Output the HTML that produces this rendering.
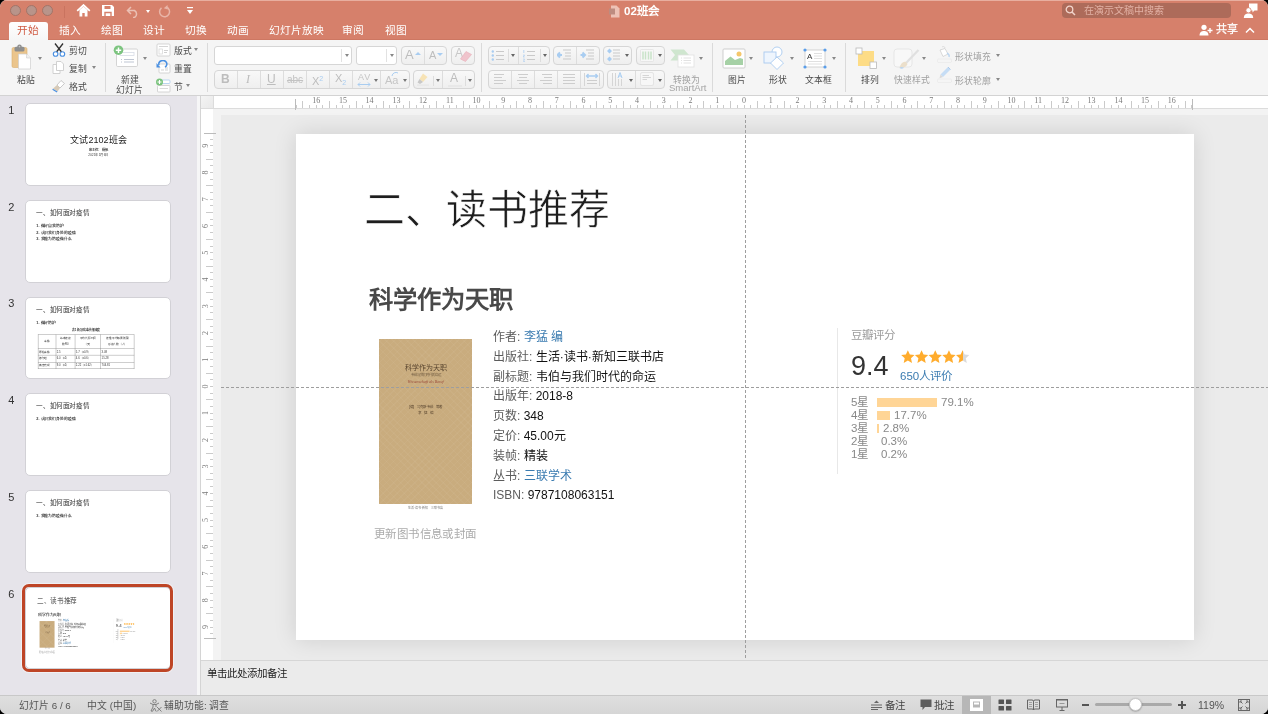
<!DOCTYPE html>
<html lang="zh-CN">
<head>
<meta charset="utf-8">
<style>
*{box-sizing:border-box;margin:0;padding:0}
html,body{width:1268px;height:714px;overflow:hidden;background:#000}
body{font-family:"Liberation Sans",sans-serif;position:relative}
.a{position:absolute}
#win{will-change:transform;position:absolute;left:0;top:0;width:1268px;height:714px;border-radius:7px;overflow:hidden;background:#F5F5F5}
#title{position:absolute;left:0;top:0;width:1268px;height:40px;background:#D6806B;border-top:1px solid #E8AE9F;border-bottom:1px solid #CD7762}
.tl{position:absolute;top:4px;width:11px;height:11px;border-radius:50%;background:#B8948A;border:1px solid #A27468}
.tab{position:absolute;top:22.5px;font-size:10.7px;line-height:13px;color:#fff;white-space:nowrap}
#ribbon{position:absolute;left:0;top:40px;width:1268px;height:56px;background:#F5F5F5;border-bottom:1px solid #D3D3D3}
.rl{position:absolute;font-size:8.8px;line-height:12px;color:#4A4A4A;white-space:nowrap;margin-top:0.6px}
.rl.rg{color:#A0A0A0}
.sep{position:absolute;top:3px;width:1px;height:49px;background:#DADADA}
.dd{position:absolute;width:0;height:0;border-left:2.5px solid transparent;border-right:2.5px solid transparent;border-top:3.5px solid #888;margin-left:0.5px}
.box{position:absolute;background:#fff;border:1px solid #D6D6D6;border-radius:3px}
.btn{position:absolute;background:linear-gradient(#F8F8F8,#EFEFEF);border:1px solid #D6D6D6;border-radius:4px}
#left{position:absolute;left:0;top:96px;width:201px;height:599px;background:#E6E4EA;border-right:4px solid #F6F6F7}
.num{position:absolute;left:8.3px;font-size:11px;color:#333}
.th{position:absolute;left:25px;width:145.6px;height:82.7px;background:#fff;border:1px solid #D2D1D6;border-radius:5px;overflow:hidden}
#canvas{position:absolute;left:213px;top:108px;width:1055px;height:552px;background:#F3F3F3}
#cv2{position:absolute;left:221px;top:115px;width:1047px;height:545px;background:#EBEBEB}
#slide{position:absolute;left:296px;top:134px;width:898px;height:506px;background:#fff;box-shadow:0 0 22px rgba(0,0,0,0.12)}
#notes{position:absolute;left:201px;top:660px;width:1067px;height:35px;background:#EBEBEB;border-top:1px solid #D6D6D6}
#status{position:absolute;left:0;top:695px;width:1268px;height:19px;background:linear-gradient(#DFDFDF,#D6D6D6);border-top:1px solid #C8C8C8}
.st{position:absolute;top:3px;font-size:9.8px;line-height:13px;color:#555;white-space:nowrap}
.info{font-size:12px;line-height:19.8px;color:#111;white-space:nowrap}
.info .lb{color:#5C5C5C}
.info .lk,.lk{color:#3A7BB0}
.bars{font-size:11.5px;line-height:13.1px;color:#888;white-space:nowrap}
.bars div{height:13.1px;position:relative}
.bars .sl{display:inline-block;width:26px}
.bars .bar{display:inline-block;height:9px;background:#FFD596;vertical-align:-1px;margin-right:4px}
</style>
</head>
<body>
<div id="win">
  <div id="title">
    <div class="tl" style="left:10px"></div>
    <div class="tl" style="left:26px"></div>
    <div class="tl" style="left:42px"></div>
    <div class="a" style="left:64px;top:5px;width:1px;height:12px;background:#C9735F"></div>
    <svg class="a" style="left:76px;top:3px" width="15" height="13" viewBox="0 0 15 13"><path d="M1.2 6.8 L7.5 1 L13.8 6.8" fill="none" stroke="#fff" stroke-width="1.7"/><path d="M3.5 6 L7.5 2.5 L11.5 6 V12.5 H8.7 V9 H6.3 V12.5 H3.5 Z" fill="#fff"/></svg>
    <svg class="a" style="left:101px;top:3px" width="14" height="13" viewBox="0 0 14 13"><path d="M1 1 H11 L13 3 V12 H1 Z" fill="#fff"/><rect x="3.5" y="2" width="6" height="3" fill="#D6806B"/><path d="M4 12 V8.5 H10 V12" fill="none" stroke="#D6806B" stroke-width="1.4"/></svg>
    <svg class="a" style="left:126px;top:4px" width="14" height="13" viewBox="0 0 14 13"><path d="M5 2 L1.5 5.5 L5 9 M1.5 5.5 H8.5 A4 4 0 0 1 8.5 12.5 H7" fill="none" stroke="#EBC0B4" stroke-width="1.5"/></svg>
    <div class="dd" style="left:145px;top:9px;border-top-color:#fff;border-left-width:2.5px;border-right-width:2.5px;border-top-width:3px"></div>
    <svg class="a" style="left:158px;top:4px" width="13" height="13" viewBox="0 0 13 13"><path d="M8.2 2 A5 5 0 1 1 3.5 2.8" fill="none" stroke="#E9B5A8" stroke-width="1.5"/><path d="M9.5 0 L9.8 4.5 L5.8 3.2 Z" fill="#E9B5A8"/></svg>
    <svg class="a" style="left:187px;top:6px" width="6" height="9" viewBox="0 0 6 9"><rect x="0" y="0" width="6" height="1.2" fill="#fff"/><path d="M0 3 H6 L3 7 Z" fill="#fff"/></svg>
    <div class="a" style="left:9px;top:21px;width:39px;height:20px;background:linear-gradient(#FFFFFF,#F5F5F5);border-radius:3px 3px 0 0"></div>
    <div class="tab" style="left:17px;color:#CF5A42;">开始</div>
    <div class="tab" style="left:59px">插入</div>
    <div class="tab" style="left:101px">绘图</div>
    <div class="tab" style="left:143px">设计</div>
    <div class="tab" style="left:185px">切换</div>
    <div class="tab" style="left:227px">动画</div>
    <div class="tab" style="left:269px">幻灯片放映</div>
    <div class="tab" style="left:342px">审阅</div>
    <div class="tab" style="left:385px">视图</div>
    <svg class="a" style="left:609px;top:4px" width="11" height="13" viewBox="0 0 11 13"><path d="M2 0.5 H7.5 L10.5 3.5 V12.5 H2 Z" fill="#EDC2B6"/><rect x="0" y="3.5" width="6" height="6" fill="#BD8C80"/></svg>
    <div class="a" style="left:624px;top:2.5px;font-size:11.5px;line-height:14px;font-weight:bold;letter-spacing:0.2px;color:#fff;white-space:nowrap">02班会</div>
    <div class="a" style="left:1062px;top:2px;width:169px;height:15px;background:#AD6B5A;border-radius:4px"></div>
    <svg class="a" style="left:1065px;top:4px" width="11" height="11" viewBox="0 0 11 11"><circle cx="4.5" cy="4.5" r="3.3" fill="none" stroke="#F2D4CB" stroke-width="1.3"/><path d="M7 7 L10 10" stroke="#F2D4CB" stroke-width="1.5"/></svg>
    <div class="a" style="left:1084px;top:3px;font-size:10px;line-height:14px;color:#E2B1A4;white-space:nowrap">在演示文稿中搜索</div>
    <svg class="a" style="left:1243px;top:2px" width="16" height="16" viewBox="0 0 16 16"><path d="M6 0.5 H14.5 V7.5 H11.5 L9.5 9.5 V7.5 H6 Z" fill="#fff"/><circle cx="5.5" cy="7.3" r="2.6" fill="#fff" stroke="#D6806B" stroke-width="0.8"/><path d="M0.8 15 C1 11.5 3 10.5 5.5 10.5 C8 10.5 10 11.5 10.2 15 Z" fill="#fff"/></svg>
    <svg class="a" style="left:1199px;top:23px" width="14" height="12" viewBox="0 0 14 12"><circle cx="5" cy="3.3" r="2.6" fill="#fff"/><path d="M0.5 11.5 C0.7 8 2.5 7 5 7 C7.5 7 9.3 8 9.5 11.5 Z" fill="#fff"/><path d="M11 4 V9 M8.5 6.5 H13.5" stroke="#fff" stroke-width="1.4"/></svg>
    <div class="a" style="left:1216px;top:20.5px;font-size:11px;line-height:14px;color:#fff;-webkit-text-stroke:0.25px #fff;white-space:nowrap">共享</div>
    <svg class="a" style="left:1245px;top:26px" width="10" height="7" viewBox="0 0 10 7"><path d="M1 5.5 L5 1.5 L9 5.5" fill="none" stroke="#fff" stroke-width="1.5"/></svg>
  </div>
  <div id="ribbon"></div>
  <div id="rib" class="a" style="left:0;top:0;width:1268px;height:96px">
    <!-- clipboard -->
    <svg class="a" style="left:11px;top:44px" width="21" height="26" viewBox="0 0 21 26"><rect x="1" y="3.5" width="15" height="20" rx="1.5" fill="#EBC58C" stroke="#D9AE6E" stroke-width="0.6"/><rect x="3.5" y="2.8" width="10" height="4.6" rx="1.5" fill="#8E8E8E"/><circle cx="8.5" cy="2.6" r="2.2" fill="#8E8E8E"/><circle cx="8.5" cy="2.6" r="0.8" fill="#C8C8C8"/><path d="M7.5 10 H15.5 L19.5 14 V25 H7.5 Z" fill="#fff" stroke="#CFCFCF" stroke-width="0.7"/><path d="M15.5 10 V14 H19.5" fill="#F0F0F0" stroke="#CFCFCF" stroke-width="0.6"/></svg>
    <div class="dd" style="left:37px;top:57px"></div>
    <div class="rl" style="left:17px;top:73px">粘贴</div>
    <svg class="a" style="left:52px;top:43px" width="14" height="14" viewBox="0 0 14 14"><path d="M3 0.5 L9.5 9 M11 0.5 L4.5 9" stroke="#333" stroke-width="1.3"/><circle cx="3.6" cy="11" r="2.3" fill="#fff" stroke="#4A90E2" stroke-width="1.1"/><circle cx="10.4" cy="11" r="2.3" fill="#fff" stroke="#4A90E2" stroke-width="1.1"/></svg>
    <div class="rl" style="left:69px;top:44px">剪切</div>
    <svg class="a" style="left:52px;top:61px" width="13" height="13" viewBox="0 0 13 13"><path d="M4.5 0.5 H9 L11.5 3 V9.5 H4.5 Z" fill="#fff" stroke="#C6C6C6" stroke-width="0.8"/><path d="M1 3.5 H4.5 V9.5 H8 V12.5 H1 Z" fill="#fff" stroke="#C6C6C6" stroke-width="0.8"/></svg>
    <div class="rl" style="left:69px;top:62px">复制</div>
    <div class="dd" style="left:91px;top:66px"></div>
    <svg class="a" style="left:52px;top:79px" width="14" height="14" viewBox="0 0 14 14"><path d="M9 1.5 L12.5 4.5 L8 9 L5 6 Z" fill="#fff" stroke="#BDBDBD" stroke-width="0.8"/><path d="M5 6 L8 9 L5.5 12.5 L0.8 9.8 Z" fill="#D8CBB8"/><path d="M0.8 9.8 L5.5 12.5 L4.8 13.5 L0.3 10.8 Z" fill="#4A90E2"/></svg>
    <div class="rl" style="left:69px;top:80px">格式</div>
    <div class="sep" style="left:105px;top:43px"></div>
    <!-- slides -->
    <svg class="a" style="left:113px;top:44px" width="26" height="24" viewBox="0 0 26 24"><rect x="3.5" y="5" width="21" height="17.5" rx="1.2" fill="#fff" stroke="#CFCFCF" stroke-width="0.9"/><rect x="7" y="8.5" width="14" height="3" fill="none" stroke="#D8DCE6" stroke-width="0.8"/><path d="M8 15.5 H9 M11 15.5 H21 M8 18 H9 M11 18 H21" stroke="#AEB7C8" stroke-width="0.8"/><circle cx="5.5" cy="6.2" r="4.8" fill="#7CC47F"/><path d="M5.5 3.5 V9 M2.8 6.2 H8.2" stroke="#fff" stroke-width="1.5"/></svg>
    <div class="dd" style="left:142px;top:57px"></div>
    <div class="rl" style="left:121px;top:73px">新建</div>
    <div class="rl" style="left:116px;top:83px">幻灯片</div>
    <svg class="a" style="left:156px;top:43px" width="15" height="14" viewBox="0 0 15 14"><rect x="1" y="1" width="13" height="12" rx="1" fill="#fff" stroke="#CACACA" stroke-width="0.8"/><path d="M3 3.5 H12" stroke="#D5D5D5" stroke-width="1.2"/><rect x="3" y="6" width="3.5" height="5" fill="none" stroke="#D5D5D5" stroke-width="0.7"/><path d="M8 7.5 H12 M8 9.5 H11" stroke="#C5C5C5" stroke-width="0.8"/></svg>
    <div class="rl" style="left:174px;top:44px">版式</div>
    <div class="dd" style="left:193px;top:48px"></div>
    <svg class="a" style="left:156px;top:60px" width="15" height="14" viewBox="0 0 15 14"><rect x="3" y="4" width="11" height="9" rx="1" fill="#fff" stroke="#CACACA" stroke-width="0.8"/><path d="M5 10 H8 M9 8 H12 M9 10 H12" stroke="#C5C5C5" stroke-width="0.8"/><path d="M3 5 A4 3.5 0 1 1 9 7" fill="none" stroke="#4A90E2" stroke-width="1.5"/><path d="M0.5 3 L4.5 7.5 L0.5 7.5 Z" fill="#4A90E2"/></svg>
    <div class="rl" style="left:174px;top:62px">重置</div>
    <svg class="a" style="left:156px;top:78px" width="15" height="15" viewBox="0 0 15 15"><rect x="4" y="2" width="10" height="3.5" rx="1" fill="#fff" stroke="#A9CBEF" stroke-width="0.8"/><rect x="1.5" y="7.5" width="12.5" height="6.5" rx="0.8" fill="#fff" stroke="#CACACA" stroke-width="0.8"/><path d="M3.5 10.5 H12" stroke="#D0D0D0" stroke-width="0.8"/><circle cx="3.5" cy="4" r="3.5" fill="#7CC47F"/><path d="M3.5 2 V6 M1.5 4 H5.5" stroke="#fff" stroke-width="1.1"/></svg>
    <div class="rl" style="left:174px;top:80px">节</div>
    <div class="dd" style="left:185px;top:84px"></div>
    <div class="sep" style="left:207px;top:43px"></div>
    <!-- font -->
    <div class="box" style="left:214px;top:46px;width:138px;height:19px"></div>
    <div class="a" style="left:341px;top:49px;width:1px;height:13px;background:#E2E2E2"></div>
    <div class="dd" style="left:344px;top:54px;border-top-color:#888"></div>
    <div class="box" style="left:356px;top:46px;width:41px;height:19px"></div>
    <div class="a" style="left:386px;top:49px;width:1px;height:13px;background:#E2E2E2"></div>
    <div class="dd" style="left:389px;top:54px;border-top-color:#888"></div>
    <div class="btn" style="left:401px;top:46px;width:46px;height:19px"></div>
    <div class="a" style="left:424px;top:47px;width:1px;height:17px;background:#DDD"></div>
    <div class="a" style="left:405px;top:47px;font-size:13px;line-height:16px;color:#BDBDBD">A</div>
    <div class="a" style="left:415px;top:52px;width:0;height:0;border-left:3px solid transparent;border-right:3px solid transparent;border-bottom:3px solid #A9CDF1"></div>
    <div class="a" style="left:429px;top:48px;font-size:11px;line-height:15px;color:#BDBDBD">A</div>
    <div class="a" style="left:437px;top:53px;width:0;height:0;border-left:3px solid transparent;border-right:3px solid transparent;border-top:3px solid #A9CDF1"></div>
    <div class="btn" style="left:451px;top:46px;width:24px;height:19px"></div>
    <div class="a" style="left:455px;top:46px;font-size:12px;line-height:15px;color:#C8C8C8">A</div>
    <svg class="a" style="left:458px;top:51px" width="14" height="11" viewBox="0 0 14 11"><path d="M8 0.5 L13.5 3.5 L7.5 10.5 L2.5 8 Z" fill="#F0C4CC" stroke="#E7AEB9" stroke-width="0.6"/></svg>
    <div class="btn" style="left:214px;top:70px;width:196px;height:19px"></div>
    <div class="a" style="left:237px;top:71px;width:1px;height:17px;background:#DDD"></div>
    <div class="a" style="left:260px;top:71px;width:1px;height:17px;background:#DDD"></div>
    <div class="a" style="left:283px;top:71px;width:1px;height:17px;background:#DDD"></div>
    <div class="a" style="left:306px;top:71px;width:1px;height:17px;background:#DDD"></div>
    <div class="a" style="left:329px;top:71px;width:1px;height:17px;background:#DDD"></div>
    <div class="a" style="left:352px;top:71px;width:1px;height:17px;background:#DDD"></div>
    <div class="a" style="left:380px;top:71px;width:1px;height:17px;background:#DDD"></div>
    <div class="a" style="left:221px;top:72px;font-size:12px;line-height:15px;font-weight:bold;color:#BDBDBD">B</div>
    <div class="a" style="left:246px;top:72px;font-size:12px;line-height:15px;font-style:italic;font-family:'Liberation Serif',serif;color:#BDBDBD">I</div>
    <div class="a" style="left:267px;top:72px;font-size:12px;line-height:15px;text-decoration:underline;color:#BDBDBD">U</div>
    <div class="a" style="left:287px;top:73px;font-size:10px;line-height:14px;text-decoration:line-through;color:#C3C3C3">abc</div>
    <div class="a" style="left:312px;top:71px;font-size:11px;line-height:15px;color:#BDBDBD">X<sup style="font-size:7px;color:#A9CDF1;vertical-align:4px">2</sup></div>
    <div class="a" style="left:335px;top:71px;font-size:11px;line-height:15px;color:#BDBDBD">X<sub style="font-size:7px;color:#A9CDF1;vertical-align:-3px">2</sub></div>
    <div class="a" style="left:358px;top:72px;font-size:9px;line-height:10px;color:#C5C5C5;letter-spacing:1px">AV</div>
    <svg class="a" style="left:357px;top:82px" width="14" height="5" viewBox="0 0 14 5"><path d="M1 2.5 H13 M3 0.5 L1 2.5 L3 4.5 M11 0.5 L13 2.5 L11 4.5" fill="none" stroke="#A9CDF1" stroke-width="1"/></svg>
    <div class="dd" style="left:373px;top:79px;border-top-color:#777"></div>
    <div class="a" style="left:385px;top:74px;font-size:11px;line-height:13px;color:#C5C5C5">Aa</div>
    <svg class="a" style="left:391px;top:71px" width="8" height="6" viewBox="0 0 8 6"><path d="M1 5 A4 4 0 0 1 7 2" fill="none" stroke="#A9CDF1" stroke-width="1"/></svg>
    <div class="dd" style="left:402px;top:79px;border-top-color:#777"></div>
    <div class="btn" style="left:413px;top:70px;width:62px;height:19px"></div>
    <div class="a" style="left:442px;top:71px;width:1px;height:17px;background:#DDD"></div>
    <svg class="a" style="left:416px;top:72px" width="14" height="14" viewBox="0 0 14 14"><path d="M7 1.5 L11.5 5 L7 10 L3.5 7 Z" fill="#F7E3B5"/><path d="M3.5 7 L7 10 L4 12 L1.5 10.5 Z" fill="#C8C8C8"/><rect x="1" y="12.5" width="12" height="1.2" fill="#E6E6E6"/></svg>
    <div class="a" style="left:433px;top:76px;width:1px;height:10px;background:#DDD"></div>
    <div class="dd" style="left:435px;top:79px;border-top-color:#777"></div>
    <div class="a" style="left:450px;top:71px;font-size:12px;line-height:14px;color:#BDBDBD">A</div>
    <div class="a" style="left:448px;top:85px;width:14px;height:2px;background:#E8E8E8"></div>
    <div class="a" style="left:465px;top:76px;width:1px;height:10px;background:#DDD"></div>
    <div class="dd" style="left:467px;top:79px;border-top-color:#777"></div>
    <div class="sep" style="left:481px;top:43px"></div>
    <!-- paragraph -->
    <div class="btn" style="left:488px;top:46px;width:62px;height:19px"></div>
    <div class="a" style="left:518px;top:47px;width:1px;height:17px;background:#DDD"></div>
    <svg class="a" style="left:491px;top:49px" width="14" height="13" viewBox="0 0 14 13"><circle cx="1.8" cy="2.5" r="1.2" fill="#A9CDF1"/><circle cx="1.8" cy="6.5" r="1.2" fill="#A9CDF1"/><circle cx="1.8" cy="10.5" r="1.2" fill="#A9CDF1"/><path d="M5 2.5 H13 M5 6.5 H13 M5 10.5 H13" stroke="#C9C9C9" stroke-width="1"/></svg>
    <div class="a" style="left:508px;top:49px;width:1px;height:13px;background:#DDD"></div>
    <div class="dd" style="left:510px;top:54px;border-top-color:#666"></div>
    <svg class="a" style="left:522px;top:49px" width="14" height="14" viewBox="0 0 14 14"><path d="M1.8 1 V4 M1.3 6 H2.5 L1.3 8 H2.5 M1.3 10 H2.5 L1.8 11.3 L2.5 12.5 H1.3" fill="none" stroke="#A9CDF1" stroke-width="0.8"/><path d="M5 2.5 H13 M5 6.5 H13 M5 10.5 H13" stroke="#C9C9C9" stroke-width="1"/></svg>
    <div class="a" style="left:540px;top:49px;width:1px;height:13px;background:#DDD"></div>
    <div class="dd" style="left:542px;top:54px;border-top-color:#666"></div>
    <div class="btn" style="left:553px;top:46px;width:47px;height:19px"></div>
    <div class="a" style="left:576px;top:47px;width:1px;height:17px;background:#DDD"></div>
    <svg class="a" style="left:557px;top:49px" width="15" height="12" viewBox="0 0 15 12"><path d="M5 6 L0.5 6 M3 3.5 L0.5 6 L3 8.5" fill="none" stroke="#A9CDF1" stroke-width="2"/><path d="M6 1 H14 M8 4 H14 M8 7 H14 M6 10 H14" stroke="#C9C9C9" stroke-width="1"/></svg>
    <svg class="a" style="left:580px;top:49px" width="15" height="12" viewBox="0 0 15 12"><path d="M0.5 6 L5 6 M2.5 3.5 L5 6 L2.5 8.5" fill="none" stroke="#A9CDF1" stroke-width="2"/><path d="M6 1 H14 M8 4 H14 M8 7 H14 M6 10 H14" stroke="#C9C9C9" stroke-width="1"/></svg>
    <div class="btn" style="left:603px;top:46px;width:29px;height:19px"></div>
    <svg class="a" style="left:607px;top:48px" width="13" height="14" viewBox="0 0 13 14"><path d="M2.5 0.5 L5 3 L2.5 5.5 L0 3 Z M2.5 8.5 L5 11 L2.5 13.5 L0 11 Z" fill="#A9CDF1"/><path d="M6 2 H13 M6 5 H13 M6 8 H13 M6 11 H13" stroke="#C9C9C9" stroke-width="1"/></svg>
    <div class="dd" style="left:624px;top:54px;border-top-color:#666"></div>
    <div class="btn" style="left:636px;top:46px;width:29px;height:19px"></div>
    <svg class="a" style="left:640px;top:49px" width="14" height="13" viewBox="0 0 14 13"><rect x="0.5" y="0.5" width="13" height="12" rx="1" fill="#F7F7F7" stroke="#E2E2E2" stroke-width="0.8"/><path d="M3 2.5 V10.5 M5.5 2.5 V10.5 M8.5 2.5 V10.5 M11 2.5 V10.5" stroke="#C9E3C9" stroke-width="1.5"/></svg>
    <div class="dd" style="left:657px;top:54px;border-top-color:#666"></div>
    <div class="btn" style="left:488px;top:70px;width:116px;height:19px"></div>
    <div class="a" style="left:511px;top:71px;width:1px;height:17px;background:#DDD"></div>
    <div class="a" style="left:534px;top:71px;width:1px;height:17px;background:#DDD"></div>
    <div class="a" style="left:557px;top:71px;width:1px;height:17px;background:#DDD"></div>
    <div class="a" style="left:580px;top:71px;width:1px;height:17px;background:#DDD"></div>
    <svg class="a" style="left:494px;top:74px" width="12" height="10" viewBox="0 0 12 10"><path d="M0 0.5 H10 M0 3.5 H8 M0 6.5 H12 M0 9.5 H9" stroke="#CDCDCD" stroke-width="1"/></svg>
    <svg class="a" style="left:517px;top:74px" width="12" height="10" viewBox="0 0 12 10"><path d="M1 0.5 H11 M2 3.5 H10 M0 6.5 H12 M2 9.5 H10" stroke="#CDCDCD" stroke-width="1"/></svg>
    <svg class="a" style="left:540px;top:74px" width="12" height="10" viewBox="0 0 12 10"><path d="M2 0.5 H12 M4 3.5 H12 M0 6.5 H12 M3 9.5 H12" stroke="#CDCDCD" stroke-width="1"/></svg>
    <svg class="a" style="left:563px;top:74px" width="12" height="10" viewBox="0 0 12 10"><path d="M0 0.5 H12 M0 3.5 H12 M0 6.5 H12 M0 9.5 H12" stroke="#CDCDCD" stroke-width="1"/></svg>
    <svg class="a" style="left:584px;top:73px" width="16" height="13" viewBox="0 0 16 13"><path d="M0.5 0 V13 M15.5 0 V13" stroke="#D5D5D5" stroke-width="1"/><path d="M2.5 3 H13.5 M4.5 1 L2.5 3 L4.5 5 M11.5 1 L13.5 3 L11.5 5" fill="none" stroke="#A9CDF1" stroke-width="1.4"/><path d="M3 7.5 H13 M3 10.5 H13" stroke="#CDCDCD" stroke-width="1"/></svg>
    <div class="btn" style="left:607px;top:70px;width:58px;height:19px"></div>
    <div class="a" style="left:635px;top:71px;width:1px;height:17px;background:#DDD"></div>
    <svg class="a" style="left:611px;top:72px" width="14" height="15" viewBox="0 0 14 15"><path d="M1.5 1 V14 M4.5 1 V14 M7.5 7 V14 M10.5 7 V14" stroke="#D5D5D5" stroke-width="1"/><path d="M7 6 L9 0.5 L11 6 M7.8 4 H10.2" fill="none" stroke="#A9CDF1" stroke-width="1"/></svg>
    <div class="dd" style="left:628px;top:79px;border-top-color:#666"></div>
    <svg class="a" style="left:640px;top:72px" width="14" height="14" viewBox="0 0 14 14"><rect x="0.5" y="0.5" width="13" height="13" rx="1.5" fill="#F7F7F7" stroke="#E0E0E0" stroke-width="0.8"/><path d="M2.5 3.5 H9 M2.5 5.5 H11 M2.5 7.5 H7" stroke="#D0D0D0" stroke-width="0.9"/></svg>
    <div class="dd" style="left:657px;top:79px;border-top-color:#666"></div>
    <svg class="a" style="left:670px;top:49px" width="25" height="19" viewBox="0 0 25 19"><path d="M0.5 0.5 H14 L19 6 L14 11.5 H0.5 L5 6 Z" fill="#CFE6CF"/><rect x="8" y="6" width="16" height="12" fill="#fff" stroke="#E0E0E0" stroke-width="0.8"/><path d="M11 9 H12 M13.5 9 H21 M11 11.5 H12 M13.5 11.5 H21 M11 14 H12 M13.5 14 H21" stroke="#DADADA" stroke-width="0.8"/></svg>
    <div class="dd" style="left:698px;top:57px;border-top-color:#888"></div>
    <div class="rl rg" style="left:673px;top:73px">转换为</div>
    <div class="a" style="left:669px;top:82px;font-size:9.5px;line-height:12px;color:#A5A5A5;white-space:nowrap">SmartArt</div>
    <div class="sep" style="left:712px;top:43px"></div>
    <!-- insert -->
    <svg class="a" style="left:722px;top:48px" width="24" height="21" viewBox="0 0 24 21"><rect x="1" y="1" width="22" height="19" rx="1" fill="#fff" stroke="#C9C9C9" stroke-width="0.9"/><path d="M3 17 V13 L8.5 8.5 L13 12 L18 10 L21 11 V17 Z" fill="#A6D1A6"/><circle cx="17" cy="6" r="2.5" fill="#F5C76B"/></svg>
    <div class="dd" style="left:748px;top:57px"></div>
    <div class="rl" style="left:728px;top:73px">图片</div>
    <svg class="a" style="left:763px;top:46px" width="24" height="25" viewBox="0 0 24 25"><circle cx="14" cy="6" r="5" fill="#fff" stroke="#A9CBEF" stroke-width="0.9"/><rect x="1" y="6" width="12" height="11" fill="#EEF5FD" stroke="#A9CBEF" stroke-width="0.9"/><path d="M14 11 L20.5 17 L14 23.5 L7.5 17 Z" fill="#fff" stroke="#A9CBEF" stroke-width="0.9"/></svg>
    <div class="dd" style="left:789px;top:57px"></div>
    <div class="rl" style="left:769px;top:73px">形状</div>
    <svg class="a" style="left:803px;top:48px" width="24" height="21" viewBox="0 0 24 21"><rect x="2" y="2" width="20" height="17" fill="#fff" stroke="#CFCFCF" stroke-width="0.9"/><text stroke="none" x="4" y="11" font-family="Liberation Sans" font-size="8" fill="#333">A</text><path d="M11 5.5 H19 M11 8 H19 M11 10.5 H19 M5 13.5 H19 M5 16 H19" stroke="#D8D8D8" stroke-width="0.8"/><circle cx="2" cy="2" r="1.6" fill="#5A9EEA"/><circle cx="22" cy="2" r="1.6" fill="#5A9EEA"/><circle cx="2" cy="19" r="1.6" fill="#5A9EEA"/><circle cx="22" cy="19" r="1.6" fill="#5A9EEA"/></svg>
    <div class="dd" style="left:831px;top:57px"></div>
    <div class="rl" style="left:805px;top:73px">文本框</div>
    <div class="sep" style="left:845px;top:43px"></div>
    <!-- drawing -->
    <svg class="a" style="left:855px;top:47px" width="23" height="23" viewBox="0 0 23 23"><rect x="3" y="4" width="16" height="15" fill="#FDDC86"/><rect x="1" y="1" width="6" height="6" fill="#fff" stroke="#B9B9B9" stroke-width="0.8"/><rect x="15" y="15" width="6.5" height="6.5" fill="#fff" stroke="#B9B9B9" stroke-width="0.8"/></svg>
    <div class="dd" style="left:881px;top:57px"></div>
    <div class="rl" style="left:861px;top:73px">排列</div>
    <svg class="a" style="left:893px;top:48px" width="27" height="23" viewBox="0 0 27 23"><rect x="1" y="1" width="18" height="18" rx="3" fill="#F8F8F8" stroke="#E4E4E4" stroke-width="0.9"/><path d="M25.5 2 L13 15" stroke="#E0E0E0" stroke-width="2.2"/><path d="M13 14 C10 13 7.5 15.5 6.5 20 C10 20.5 13.5 19 14.5 16 Z" fill="#EBDFCB"/><path d="M6.5 20 C8 18.5 9.5 19 11 19.8 C9.5 21 8 21 6.5 20 Z" fill="#B8D4F0"/></svg>
    <div class="dd" style="left:921px;top:57px;border-top-color:#888"></div>
    <div class="rl rg" style="left:894px;top:73px">快速样式</div>
    <svg class="a" style="left:937px;top:46px" width="15" height="17" viewBox="0 0 15 17"><path d="M5 1 C6 0 8 0.5 8 2" fill="none" stroke="#D8D8D8" stroke-width="0.8"/><path d="M3 4 L8 2.5 L11 8 L6 10.5 Z" fill="#fff" stroke="#CFCFCF" stroke-width="0.8"/><path d="M10 7 C12 8 12.5 9.5 12 11" fill="none" stroke="#B8D4F0" stroke-width="1.3"/><rect x="0.5" y="13" width="14" height="3.5" rx="1" fill="#F5F5F5" stroke="#E8E8E8" stroke-width="0.6"/></svg>
    <div class="rl rg" style="left:955px;top:50px">形状填充</div>
    <div class="dd" style="left:995px;top:54px;border-top-color:#888"></div>
    <svg class="a" style="left:937px;top:66px" width="15" height="17" viewBox="0 0 15 17"><path d="M11 1 L13.5 3.5 L6 11 L3.5 8.5 Z" fill="#C6DDF5"/><path d="M3.5 8.5 L6 11 L2.5 12.3 Z" fill="#D9D9D9"/><path d="M11 1 L13.5 3.5" stroke="#AFCBEA" stroke-width="1"/><rect x="0.5" y="13" width="14" height="3.5" rx="1" fill="#F5F5F5" stroke="#E8E8E8" stroke-width="0.6"/></svg>
    <div class="rl rg" style="left:955px;top:74px">形状轮廓</div>
    <div class="dd" style="left:995px;top:78px;border-top-color:#888"></div>
  </div>
  <div id="left">
  <div class="num" style="top:8.0px">1</div>
  <div class="th" style="top:7.3px"><div class="a" style="left:0;top:0;width:899px;height:506px;transform:scale(0.16129);transform-origin:0 0;will-change:transform"><div class="a" style="left:0;top:190px;width:899px;text-align:center;font-size:56px;line-height:70px;color:#222;white-space:nowrap">文试2102班会</div><div class="a" style="left:0;top:274px;width:899px;text-align:center;font-size:20px;line-height:26px;color:#333;font-weight:bold">班主任：杨帆</div><div class="a" style="left:0;top:302px;width:899px;text-align:center;font-size:20px;line-height:26px;color:#444">2021年1月6日</div></div></div>
  <div class="num" style="top:104.7px">2</div>
  <div class="th" style="top:104.0px"><div class="a" style="left:0;top:0;width:899px;height:506px;transform:scale(0.16129);transform-origin:0 0;will-change:transform"><div class="a" style="left:64px;top:50px;font-size:41px;line-height:50px;color:#333;white-space:nowrap">一、如何面对疫情</div><div class="a" style="left:64px;top:136.0px;font-size:24px;line-height:38px;color:#333;font-weight:bold;white-space:nowrap">1. 做好自我防护</div><div class="a" style="left:64px;top:174.6px;font-size:24px;line-height:38px;color:#333;font-weight:bold;white-space:nowrap">2. 认识我们身处的疫情</div><div class="a" style="left:64px;top:213.2px;font-size:24px;line-height:38px;color:#333;font-weight:bold;white-space:nowrap">3. 我能为防疫做什么</div></div></div>
  <div class="num" style="top:201.4px">3</div>
  <div class="th" style="top:200.7px"><div class="a" style="left:0;top:0;width:899px;height:506px;transform:scale(0.16129);transform-origin:0 0;will-change:transform"><div class="a" style="left:64px;top:50px;font-size:41px;line-height:50px;color:#333;white-space:nowrap">一、如何面对疫情</div><div class="a" style="left:64px;top:136.0px;font-size:24px;line-height:38px;color:#333;font-weight:bold;white-space:nowrap">1. 做好防护</div><div class="a" style="left:74px;top:188px;width:597px;text-align:center;font-size:18px;line-height:26px;color:#333;font-weight:bold">表1 新冠病毒传播速度</div><table class="a" style="left:74px;top:226px;width:597px;height:212px;border-collapse:collapse;font-size:17px;color:#333"><tr style="height:84px"><td style="border:2px solid #666;width:111px;text-align:center;padding:0 4px;line-height:34px">毒株</td><td style="border:2px solid #666;width:119px;text-align:center;padding:0 4px;line-height:34px">基本传染<br>数R0</td><td style="border:2px solid #666;width:160px;text-align:center;padding:0 4px;line-height:34px">平均代际时间<br>（天）</td><td style="border:2px solid #666;width:207px;text-align:center;padding:0 4px;line-height:34px">传播平均每周所需<br>感染人数（人）</td></tr><tr style="height:43px"><td style="border:2px solid #666;width:111px;text-align:left;padding:0 4px;line-height:34px">原始毒株</td><td style="border:2px solid #666;width:119px;text-align:left;padding:0 4px;line-height:34px">2.5</td><td style="border:2px solid #666;width:160px;text-align:left;padding:0 4px;line-height:34px">5.7（±0.9）</td><td style="border:2px solid #666;width:207px;text-align:left;padding:0 4px;line-height:34px">3.08</td></tr><tr style="height:44px"><td style="border:2px solid #666;width:111px;text-align:left;padding:0 4px;line-height:34px">德尔塔</td><td style="border:2px solid #666;width:119px;text-align:left;padding:0 4px;line-height:34px">6.0（±2）</td><td style="border:2px solid #666;width:160px;text-align:left;padding:0 4px;line-height:34px">4.6（±0.6）</td><td style="border:2px solid #666;width:207px;text-align:left;padding:0 4px;line-height:34px">15.28</td></tr><tr style="height:41px"><td style="border:2px solid #666;width:111px;text-align:left;padding:0 4px;line-height:34px">奥密克戎</td><td style="border:2px solid #666;width:119px;text-align:left;padding:0 4px;line-height:34px">9.0（±2）</td><td style="border:2px solid #666;width:160px;text-align:left;padding:0 4px;line-height:34px">2.22（±1.62）</td><td style="border:2px solid #666;width:207px;text-align:left;padding:0 4px;line-height:34px">704.81</td></tr></table></div></div>
  <div class="num" style="top:298.1px">4</div>
  <div class="th" style="top:297.4px"><div class="a" style="left:0;top:0;width:899px;height:506px;transform:scale(0.16129);transform-origin:0 0;will-change:transform"><div class="a" style="left:64px;top:50px;font-size:41px;line-height:50px;color:#333;white-space:nowrap">一、如何面对疫情</div><div class="a" style="left:64px;top:136.0px;font-size:24px;line-height:38px;color:#333;font-weight:bold;white-space:nowrap">2. 认识我们身处的疫情</div></div></div>
  <div class="num" style="top:394.8px">5</div>
  <div class="th" style="top:394.1px"><div class="a" style="left:0;top:0;width:899px;height:506px;transform:scale(0.16129);transform-origin:0 0;will-change:transform"><div class="a" style="left:64px;top:50px;font-size:41px;line-height:50px;color:#333;white-space:nowrap">一、如何面对疫情</div><div class="a" style="left:64px;top:136.0px;font-size:24px;line-height:38px;color:#333;font-weight:bold;white-space:nowrap">3. 我能为防疫做什么</div></div></div>
  <div class="num" style="top:491.5px">6</div>
  <div class="th" style="top:490.8px"><div class="a" style="left:0;top:0;width:899px;height:506px;transform:scale(0.16129);transform-origin:0 0;will-change:transform">
    <div class="a" style="left:69px;top:51px;font-size:41px;line-height:50px;color:#1E1E1E;white-space:nowrap;-webkit-text-stroke:0.6px #fff">二、读书推荐</div>
    <div class="a" style="left:74px;top:151px;font-size:24.3px;line-height:30px;font-weight:bold;color:#494949;white-space:nowrap">科学作为天职</div>
    <div class="a" style="left:84px;top:205px;width:93px;height:165px;background-color:#C9AC7E;background-image:repeating-linear-gradient(45deg,rgba(255,255,255,0.035) 0 1px,transparent 1px 5px),repeating-linear-gradient(-45deg,rgba(255,255,255,0.035) 0 1px,transparent 1px 5px)">
      <div class="a" style="left:0;top:25px;width:93px;text-align:center;font-family:'Liberation Serif',serif;font-size:7px;line-height:8px;color:#5A4630;white-space:nowrap">科学作为天职</div>
      <div class="a" style="left:0;top:34px;width:93px;text-align:center;font-size:3.5px;line-height:5px;color:#6E5A40;white-space:nowrap">韦伯与我们时代的命运</div>
      <div class="a" style="left:0;top:40px;width:93px;text-align:center;font-family:'Liberation Serif',serif;font-style:italic;font-size:4px;line-height:5px;color:#9A4A3A;white-space:nowrap">Wissenschaft als Beruf</div>
      <div class="a" style="left:0;top:66px;width:93px;text-align:center;font-size:3.5px;line-height:5px;color:#5A4630;white-space:nowrap">[德]　马克斯·韦伯　等著</div>
      <div class="a" style="left:0;top:72px;width:93px;text-align:center;font-size:3.5px;line-height:5px;color:#5A4630;white-space:nowrap">李　猛　编</div>
    </div>
    <div class="a" style="left:84px;top:372px;width:93px;text-align:center;font-size:3px;line-height:4px;color:#777;white-space:nowrap">生活·读书·新知　三联书店</div>
    <div class="info a" style="left:198px;top:194px">
      <div><span class="lb">作者:</span> <span class="lk">李猛 编</span></div>
      <div><span class="lb">出版社:</span> 生活·读书·新知三联书店</div>
      <div><span class="lb">副标题:</span> 韦伯与我们时代的命运</div>
      <div><span class="lb">出版年:</span> 2018-8</div>
      <div><span class="lb">页数:</span> 348</div>
      <div><span class="lb">定价:</span> 45.00元</div>
      <div><span class="lb">装帧:</span> 精装</div>
      <div><span class="lb">丛书:</span> <span class="lk">三联学术</span></div>
      <div><span class="lb">ISBN:</span> 9787108063151</div>
    </div>
    <div class="a" style="left:79px;top:392px;letter-spacing:0.4px;font-size:11.5px;line-height:16px;color:#ABABAB;white-space:nowrap">更新图书信息或封面</div>
    <div class="a" style="left:542px;top:194px;width:1px;height:146px;background:#E8E8E8"></div>
    <div class="a" style="left:556px;top:193px;font-size:11.5px;line-height:16px;color:#9A9A9A;white-space:nowrap">豆瓣评分</div>
    <div class="a" style="left:556px;top:215px;font-size:27px;line-height:34px;color:#333;white-space:nowrap">9.4</div>
    <svg class="a" style="left:606px;top:216px" width="69" height="14" viewBox="0 0 69 14"><defs><linearGradient id="hs"><stop offset="0.55" stop-color="#FFAC2D"/><stop offset="0.55" stop-color="#DADADA"/></linearGradient></defs><g transform="translate(0.0 0)" fill="#FFAC2D"><path d="M6.85 0.3 L8.85 4.6 L13.5 5.1 L10 8.2 L11 12.9 L6.85 10.5 L2.7 12.9 L3.7 8.2 L0.2 5.1 L4.85 4.6 Z"/></g><g transform="translate(13.7 0)" fill="#FFAC2D"><path d="M6.85 0.3 L8.85 4.6 L13.5 5.1 L10 8.2 L11 12.9 L6.85 10.5 L2.7 12.9 L3.7 8.2 L0.2 5.1 L4.85 4.6 Z"/></g><g transform="translate(27.4 0)" fill="#FFAC2D"><path d="M6.85 0.3 L8.85 4.6 L13.5 5.1 L10 8.2 L11 12.9 L6.85 10.5 L2.7 12.9 L3.7 8.2 L0.2 5.1 L4.85 4.6 Z"/></g><g transform="translate(41.1 0)" fill="#FFAC2D"><path d="M6.85 0.3 L8.85 4.6 L13.5 5.1 L10 8.2 L11 12.9 L6.85 10.5 L2.7 12.9 L3.7 8.2 L0.2 5.1 L4.85 4.6 Z"/></g><g transform="translate(54.8 0)" fill="url(#hs)"><path d="M6.85 0.3 L8.85 4.6 L13.5 5.1 L10 8.2 L11 12.9 L6.85 10.5 L2.7 12.9 L3.7 8.2 L0.2 5.1 L4.85 4.6 Z"/></g></svg>
    <div class="a" style="left:605px;top:234px;font-size:11.5px;line-height:16px;color:#3A7BB0;white-space:nowrap">650人评价</div>
    <div class="bars a" style="left:556px;top:262px">
      <div><span class="sl">5星</span><span class="bar" style="width:60px"></span><span class="pc">79.1%</span></div>
      <div><span class="sl">4星</span><span class="bar" style="width:13px"></span><span class="pc">17.7%</span></div>
      <div><span class="sl">3星</span><span class="bar" style="width:2px"></span><span class="pc">2.8%</span></div>
      <div><span class="sl">2星</span><span class="bar" style="width:0px"></span><span class="pc">0.3%</span></div>
      <div><span class="sl">1星</span><span class="bar" style="width:0px"></span><span class="pc">0.2%</span></div>
    </div></div></div>
  <div class="a" style="left:22.4px;top:488.3px;width:150.5px;height:87.5px;border:3px solid #BE4526;border-radius:7px;box-shadow:0 0 0 1px rgba(255,255,255,0.45)"></div>
</div>
  <div id="canvas"></div>
  <div id="cv2"></div>
  <div id="slide"><div class="a" style="left:-1px;top:0">
    <div class="a" style="left:69px;top:51px;font-size:41px;line-height:50px;color:#1E1E1E;white-space:nowrap;-webkit-text-stroke:0.6px #fff">二、读书推荐</div>
    <div class="a" style="left:74px;top:151px;font-size:24.3px;line-height:30px;font-weight:bold;color:#494949;white-space:nowrap">科学作为天职</div>
    <div class="a" style="left:84px;top:205px;width:93px;height:165px;background-color:#C9AC7E;background-image:repeating-linear-gradient(45deg,rgba(255,255,255,0.035) 0 1px,transparent 1px 5px),repeating-linear-gradient(-45deg,rgba(255,255,255,0.035) 0 1px,transparent 1px 5px)">
      <div class="a" style="left:0;top:25px;width:93px;text-align:center;font-family:'Liberation Serif',serif;font-size:7px;line-height:8px;color:#5A4630;white-space:nowrap">科学作为天职</div>
      <div class="a" style="left:0;top:34px;width:93px;text-align:center;font-size:3.5px;line-height:5px;color:#6E5A40;white-space:nowrap">韦伯与我们时代的命运</div>
      <div class="a" style="left:0;top:40px;width:93px;text-align:center;font-family:'Liberation Serif',serif;font-style:italic;font-size:4px;line-height:5px;color:#9A4A3A;white-space:nowrap">Wissenschaft als Beruf</div>
      <div class="a" style="left:0;top:66px;width:93px;text-align:center;font-size:3.5px;line-height:5px;color:#5A4630;white-space:nowrap">[德]　马克斯·韦伯　等著</div>
      <div class="a" style="left:0;top:72px;width:93px;text-align:center;font-size:3.5px;line-height:5px;color:#5A4630;white-space:nowrap">李　猛　编</div>
    </div>
    <div class="a" style="left:84px;top:372px;width:93px;text-align:center;font-size:3px;line-height:4px;color:#777;white-space:nowrap">生活·读书·新知　三联书店</div>
    <div class="info a" style="left:198px;top:194px">
      <div><span class="lb">作者:</span> <span class="lk">李猛 编</span></div>
      <div><span class="lb">出版社:</span> 生活·读书·新知三联书店</div>
      <div><span class="lb">副标题:</span> 韦伯与我们时代的命运</div>
      <div><span class="lb">出版年:</span> 2018-8</div>
      <div><span class="lb">页数:</span> 348</div>
      <div><span class="lb">定价:</span> 45.00元</div>
      <div><span class="lb">装帧:</span> 精装</div>
      <div><span class="lb">丛书:</span> <span class="lk">三联学术</span></div>
      <div><span class="lb">ISBN:</span> 9787108063151</div>
    </div>
    <div class="a" style="left:79px;top:392px;letter-spacing:0.4px;font-size:11.5px;line-height:16px;color:#ABABAB;white-space:nowrap">更新图书信息或封面</div>
    <div class="a" style="left:542px;top:194px;width:1px;height:146px;background:#E8E8E8"></div>
    <div class="a" style="left:556px;top:193px;font-size:11.5px;line-height:16px;color:#9A9A9A;white-space:nowrap">豆瓣评分</div>
    <div class="a" style="left:556px;top:215px;font-size:27px;line-height:34px;color:#333;white-space:nowrap">9.4</div>
    <svg class="a" style="left:606px;top:216px" width="69" height="14" viewBox="0 0 69 14"><defs><linearGradient id="hs"><stop offset="0.55" stop-color="#FFAC2D"/><stop offset="0.55" stop-color="#DADADA"/></linearGradient></defs><g transform="translate(0.0 0)" fill="#FFAC2D"><path d="M6.85 0.3 L8.85 4.6 L13.5 5.1 L10 8.2 L11 12.9 L6.85 10.5 L2.7 12.9 L3.7 8.2 L0.2 5.1 L4.85 4.6 Z"/></g><g transform="translate(13.7 0)" fill="#FFAC2D"><path d="M6.85 0.3 L8.85 4.6 L13.5 5.1 L10 8.2 L11 12.9 L6.85 10.5 L2.7 12.9 L3.7 8.2 L0.2 5.1 L4.85 4.6 Z"/></g><g transform="translate(27.4 0)" fill="#FFAC2D"><path d="M6.85 0.3 L8.85 4.6 L13.5 5.1 L10 8.2 L11 12.9 L6.85 10.5 L2.7 12.9 L3.7 8.2 L0.2 5.1 L4.85 4.6 Z"/></g><g transform="translate(41.1 0)" fill="#FFAC2D"><path d="M6.85 0.3 L8.85 4.6 L13.5 5.1 L10 8.2 L11 12.9 L6.85 10.5 L2.7 12.9 L3.7 8.2 L0.2 5.1 L4.85 4.6 Z"/></g><g transform="translate(54.8 0)" fill="url(#hs)"><path d="M6.85 0.3 L8.85 4.6 L13.5 5.1 L10 8.2 L11 12.9 L6.85 10.5 L2.7 12.9 L3.7 8.2 L0.2 5.1 L4.85 4.6 Z"/></g></svg>
    <div class="a" style="left:605px;top:234px;font-size:11.5px;line-height:16px;color:#3A7BB0;white-space:nowrap">650人评价</div>
    <div class="bars a" style="left:556px;top:262px">
      <div><span class="sl">5星</span><span class="bar" style="width:60px"></span><span class="pc">79.1%</span></div>
      <div><span class="sl">4星</span><span class="bar" style="width:13px"></span><span class="pc">17.7%</span></div>
      <div><span class="sl">3星</span><span class="bar" style="width:2px"></span><span class="pc">2.8%</span></div>
      <div><span class="sl">2星</span><span class="bar" style="width:0px"></span><span class="pc">0.3%</span></div>
      <div><span class="sl">1星</span><span class="bar" style="width:0px"></span><span class="pc">0.2%</span></div>
    </div></div>
  </div>
  <svg class="a" style="left:221px;top:387px" width="1047" height="1"><path d="M0 0.5 H1047" stroke="#9E9E9E" stroke-width="1" stroke-dasharray="3 2"/></svg>
  <svg class="a" style="left:745px;top:115px" width="1" height="545"><path d="M0.5 0 V545" stroke="#9E9E9E" stroke-width="1" stroke-dasharray="3 2"/></svg>
  <div class="a" style="left:201px;top:96px;width:1067px;height:13px;background:#fff;border-bottom:1px solid #DCDCDC"></div>
  <div class="a" style="left:201px;top:96px;width:13px;height:13px;background:linear-gradient(135deg,#F4F4F4,#E9E9E9);border-right:1px solid #DCDCDC;border-bottom:1px solid #DCDCDC"></div>
  <div class="a" style="left:201px;top:109px;width:12px;height:551px;background:#fff"></div>
  <svg class="a" style="left:213px;top:96px;overflow:visible" width="1055" height="12" viewBox="0 0 1055 12"><g stroke="#CACACA" stroke-width="1" fill="#7A7A7A" font-family="Liberation Serif" font-size="8" text-anchor="middle" ><path d="M83.5 9 V12" /><path d="M89.5 5 V12" /><path d="M96.5 9 V12" /><path d="M103.5 9 V12" /><text stroke="none" x="103.2" y="7.2">16</text><path d="M109.5 9 V12" /><path d="M116.5 5 V12" /><path d="M123.5 9 V12" /><path d="M129.5 9 V12" /><text stroke="none" x="129.9" y="7.2">15</text><path d="M136.5 9 V12" /><path d="M143.5 5 V12" /><path d="M149.5 9 V12" /><path d="M156.5 9 V12" /><text stroke="none" x="156.6" y="7.2">14</text><path d="M163.5 9 V12" /><path d="M170.5 5 V12" /><path d="M176.5 9 V12" /><path d="M183.5 9 V12" /><text stroke="none" x="183.4" y="7.2">13</text><path d="M190.5 9 V12" /><path d="M196.5 5 V12" /><path d="M203.5 9 V12" /><path d="M210.5 9 V12" /><text stroke="none" x="210.1" y="7.2">12</text><path d="M216.5 9 V12" /><path d="M223.5 5 V12" /><path d="M230.5 9 V12" /><path d="M236.5 9 V12" /><text stroke="none" x="236.9" y="7.2">11</text><path d="M243.5 9 V12" /><path d="M250.5 5 V12" /><path d="M256.5 9 V12" /><path d="M263.5 9 V12" /><text stroke="none" x="263.6" y="7.2">10</text><path d="M270.5 9 V12" /><path d="M276.5 5 V12" /><path d="M283.5 9 V12" /><path d="M290.5 9 V12" /><text stroke="none" x="290.3" y="7.2">9</text><path d="M297.5 9 V12" /><path d="M303.5 5 V12" /><path d="M310.5 9 V12" /><path d="M317.5 9 V12" /><text stroke="none" x="317.1" y="7.2">8</text><path d="M323.5 9 V12" /><path d="M330.5 5 V12" /><path d="M337.5 9 V12" /><path d="M343.5 9 V12" /><text stroke="none" x="343.8" y="7.2">7</text><path d="M350.5 9 V12" /><path d="M357.5 5 V12" /><path d="M363.5 9 V12" /><path d="M370.5 9 V12" /><text stroke="none" x="370.6" y="7.2">6</text><path d="M377.5 9 V12" /><path d="M383.5 5 V12" /><path d="M390.5 9 V12" /><path d="M397.5 9 V12" /><text stroke="none" x="397.3" y="7.2">5</text><path d="M403.5 9 V12" /><path d="M410.5 5 V12" /><path d="M417.5 9 V12" /><path d="M424.5 9 V12" /><text stroke="none" x="424.0" y="7.2">4</text><path d="M430.5 9 V12" /><path d="M437.5 5 V12" /><path d="M444.5 9 V12" /><path d="M450.5 9 V12" /><text stroke="none" x="450.8" y="7.2">3</text><path d="M457.5 9 V12" /><path d="M464.5 5 V12" /><path d="M470.5 9 V12" /><path d="M477.5 9 V12" /><text stroke="none" x="477.5" y="7.2">2</text><path d="M484.5 9 V12" /><path d="M490.5 5 V12" /><path d="M497.5 9 V12" /><path d="M504.5 9 V12" /><text stroke="none" x="504.3" y="7.2">1</text><path d="M510.5 9 V12" /><path d="M517.5 5 V12" /><path d="M524.5 9 V12" /><path d="M531.5 9 V12" /><text stroke="none" x="531.0" y="7.2">0</text><path d="M537.5 9 V12" /><path d="M544.5 5 V12" /><path d="M551.5 9 V12" /><path d="M557.5 9 V12" /><text stroke="none" x="557.7" y="7.2">1</text><path d="M564.5 9 V12" /><path d="M571.5 5 V12" /><path d="M577.5 9 V12" /><path d="M584.5 9 V12" /><text stroke="none" x="584.5" y="7.2">2</text><path d="M591.5 9 V12" /><path d="M597.5 5 V12" /><path d="M604.5 9 V12" /><path d="M611.5 9 V12" /><text stroke="none" x="611.2" y="7.2">3</text><path d="M617.5 9 V12" /><path d="M624.5 5 V12" /><path d="M631.5 9 V12" /><path d="M637.5 9 V12" /><text stroke="none" x="638.0" y="7.2">4</text><path d="M644.5 9 V12" /><path d="M651.5 5 V12" /><path d="M658.5 9 V12" /><path d="M664.5 9 V12" /><text stroke="none" x="664.7" y="7.2">5</text><path d="M671.5 9 V12" /><path d="M678.5 5 V12" /><path d="M684.5 9 V12" /><path d="M691.5 9 V12" /><text stroke="none" x="691.4" y="7.2">6</text><path d="M698.5 9 V12" /><path d="M704.5 5 V12" /><path d="M711.5 9 V12" /><path d="M718.5 9 V12" /><text stroke="none" x="718.2" y="7.2">7</text><path d="M724.5 9 V12" /><path d="M731.5 5 V12" /><path d="M738.5 9 V12" /><path d="M744.5 9 V12" /><text stroke="none" x="744.9" y="7.2">8</text><path d="M751.5 9 V12" /><path d="M758.5 5 V12" /><path d="M764.5 9 V12" /><path d="M771.5 9 V12" /><text stroke="none" x="771.7" y="7.2">9</text><path d="M778.5 9 V12" /><path d="M785.5 5 V12" /><path d="M791.5 9 V12" /><path d="M798.5 9 V12" /><text stroke="none" x="798.4" y="7.2">10</text><path d="M805.5 9 V12" /><path d="M811.5 5 V12" /><path d="M818.5 9 V12" /><path d="M825.5 9 V12" /><text stroke="none" x="825.1" y="7.2">11</text><path d="M831.5 9 V12" /><path d="M838.5 5 V12" /><path d="M845.5 9 V12" /><path d="M851.5 9 V12" /><text stroke="none" x="851.9" y="7.2">12</text><path d="M858.5 9 V12" /><path d="M865.5 5 V12" /><path d="M871.5 9 V12" /><path d="M878.5 9 V12" /><text stroke="none" x="878.6" y="7.2">13</text><path d="M885.5 9 V12" /><path d="M891.5 5 V12" /><path d="M898.5 9 V12" /><path d="M905.5 9 V12" /><text stroke="none" x="905.4" y="7.2">14</text><path d="M912.5 9 V12" /><path d="M918.5 5 V12" /><path d="M925.5 9 V12" /><path d="M932.5 9 V12" /><text stroke="none" x="932.1" y="7.2">15</text><path d="M938.5 9 V12" /><path d="M945.5 5 V12" /><path d="M952.5 9 V12" /><path d="M958.5 9 V12" /><text stroke="none" x="958.8" y="7.2">16</text><path d="M965.5 9 V12" /><path d="M972.5 5 V12" /><path d="M978.5 9 V12" /><path d="M82.5 3 V14" stroke="#BBBBBB"/><path d="M979.5 3 V14" stroke="#BBBBBB"/></g></svg>
  <svg class="a" style="left:201px;top:108px;overflow:visible" width="12" height="552" viewBox="0 0 12 552"><g stroke="#CACACA" stroke-width="1" fill="#7A7A7A" font-family="Liberation Serif" font-size="8" text-anchor="middle"><path d="M9 31.5 H12" /><path d="M9 37.5 H12" /><text stroke="none" transform="translate(4.2 37.7) rotate(-90)" x="0" y="2.5">9</text><path d="M9 44.5 H12" /><path d="M5 51.5 H12" /><path d="M9 57.5 H12" /><path d="M9 64.5 H12" /><text stroke="none" transform="translate(4.2 64.5) rotate(-90)" x="0" y="2.5">8</text><path d="M9 71.5 H12" /><path d="M5 77.5 H12" /><path d="M9 84.5 H12" /><path d="M9 91.5 H12" /><text stroke="none" transform="translate(4.2 91.2) rotate(-90)" x="0" y="2.5">7</text><path d="M9 97.5 H12" /><path d="M5 104.5 H12" /><path d="M9 111.5 H12" /><path d="M9 117.5 H12" /><text stroke="none" transform="translate(4.2 118.0) rotate(-90)" x="0" y="2.5">6</text><path d="M9 124.5 H12" /><path d="M5 131.5 H12" /><path d="M9 138.5 H12" /><path d="M9 144.5 H12" /><text stroke="none" transform="translate(4.2 144.7) rotate(-90)" x="0" y="2.5">5</text><path d="M9 151.5 H12" /><path d="M5 158.5 H12" /><path d="M9 164.5 H12" /><path d="M9 171.5 H12" /><text stroke="none" transform="translate(4.2 171.4) rotate(-90)" x="0" y="2.5">4</text><path d="M9 178.5 H12" /><path d="M5 184.5 H12" /><path d="M9 191.5 H12" /><path d="M9 198.5 H12" /><text stroke="none" transform="translate(4.2 198.2) rotate(-90)" x="0" y="2.5">3</text><path d="M9 204.5 H12" /><path d="M5 211.5 H12" /><path d="M9 218.5 H12" /><path d="M9 224.5 H12" /><text stroke="none" transform="translate(4.2 224.9) rotate(-90)" x="0" y="2.5">2</text><path d="M9 231.5 H12" /><path d="M5 238.5 H12" /><path d="M9 244.5 H12" /><path d="M9 251.5 H12" /><text stroke="none" transform="translate(4.2 251.7) rotate(-90)" x="0" y="2.5">1</text><path d="M9 258.5 H12" /><path d="M5 265.5 H12" /><path d="M9 271.5 H12" /><path d="M9 278.5 H12" /><text stroke="none" transform="translate(4.2 278.4) rotate(-90)" x="0" y="2.5">0</text><path d="M9 285.5 H12" /><path d="M5 291.5 H12" /><path d="M9 298.5 H12" /><path d="M9 305.5 H12" /><text stroke="none" transform="translate(4.2 305.1) rotate(-90)" x="0" y="2.5">1</text><path d="M9 311.5 H12" /><path d="M5 318.5 H12" /><path d="M9 325.5 H12" /><path d="M9 331.5 H12" /><text stroke="none" transform="translate(4.2 331.9) rotate(-90)" x="0" y="2.5">2</text><path d="M9 338.5 H12" /><path d="M5 345.5 H12" /><path d="M9 351.5 H12" /><path d="M9 358.5 H12" /><text stroke="none" transform="translate(4.2 358.6) rotate(-90)" x="0" y="2.5">3</text><path d="M9 365.5 H12" /><path d="M5 371.5 H12" /><path d="M9 378.5 H12" /><path d="M9 385.5 H12" /><text stroke="none" transform="translate(4.2 385.4) rotate(-90)" x="0" y="2.5">4</text><path d="M9 392.5 H12" /><path d="M5 398.5 H12" /><path d="M9 405.5 H12" /><path d="M9 412.5 H12" /><text stroke="none" transform="translate(4.2 412.1) rotate(-90)" x="0" y="2.5">5</text><path d="M9 418.5 H12" /><path d="M5 425.5 H12" /><path d="M9 432.5 H12" /><path d="M9 438.5 H12" /><text stroke="none" transform="translate(4.2 438.8) rotate(-90)" x="0" y="2.5">6</text><path d="M9 445.5 H12" /><path d="M5 452.5 H12" /><path d="M9 458.5 H12" /><path d="M9 465.5 H12" /><text stroke="none" transform="translate(4.2 465.6) rotate(-90)" x="0" y="2.5">7</text><path d="M9 472.5 H12" /><path d="M5 478.5 H12" /><path d="M9 485.5 H12" /><path d="M9 492.5 H12" /><text stroke="none" transform="translate(4.2 492.3) rotate(-90)" x="0" y="2.5">8</text><path d="M9 499.5 H12" /><path d="M5 505.5 H12" /><path d="M9 512.5 H12" /><path d="M9 519.5 H12" /><text stroke="none" transform="translate(4.2 519.1) rotate(-90)" x="0" y="2.5">9</text><path d="M9 525.5 H12" /><path d="M3 25.5 H15" stroke="#BBBBBB"/><path d="M3 530.5 H15" stroke="#BBBBBB"/></g></svg>
  
  <div class="a" style="left:200px;top:96px;width:1px;height:599px;background:#D4D4D4"></div>
  <div id="notes">
    <div class="a" style="left:6px;top:6px;font-family:'Liberation Serif',serif;font-size:10.5px;line-height:14px;color:#222;white-space:nowrap">单击此处添加备注</div>
  </div>
  <div id="status">
    <div class="st" style="left:19px">幻灯片 6 / 6</div>
    <div class="st" style="left:87px">中文 (中国)</div>
    <svg class="a" style="left:149px;top:3px" width="14" height="13" viewBox="0 0 14 13"><circle cx="5.5" cy="2.3" r="1.7" fill="none" stroke="#777" stroke-width="0.9"/><path d="M1 4 L4 5.5 L4 8 L2 12 L3.5 12.3 L5.5 9 L7 12.3 M7 5.5 L10 4" fill="none" stroke="#777" stroke-width="0.9" stroke-linejoin="round"/><path d="M4 5.5 H7 V8" fill="none" stroke="#777" stroke-width="0.9"/><path d="M8 8 L12.5 12.5 M12.5 8 L8 12.5" stroke="#777" stroke-width="0.9"/></svg>
    <div class="st" style="left:164px">辅助功能: 调查</div>
    <svg class="a" style="left:871px;top:4px" width="11" height="10" viewBox="0 0 11 10"><path d="M5.5 0.5 L3 3 H8 Z" fill="#666"/><path d="M0 5 H11 M0 7.5 H11 M0 9.5 H7" stroke="#666" stroke-width="1"/></svg>
    <div class="st" style="left:885px;font-size:10.5px;color:#444">备注</div>
    <svg class="a" style="left:920px;top:3px" width="12" height="12" viewBox="0 0 12 12"><path d="M0.5 0.5 H11.5 V8 H5 L2.5 11 V8 H0.5 Z" fill="#5E5E5E"/></svg>
    <div class="st" style="left:934px;font-size:10.5px;color:#444">批注</div>
    <div class="a" style="left:962px;top:0;width:29px;height:19px;background:#B7B7B7"></div>
    <svg class="a" style="left:970px;top:3px" width="13" height="12" viewBox="0 0 13 12"><rect x="0.5" y="0.5" width="12" height="11" fill="#fff" stroke="#fff"/><rect x="3" y="2.5" width="7" height="6" fill="#B7B7B7"/><rect x="4" y="3.5" width="5" height="2" fill="#fff"/></svg>
    <svg class="a" style="left:998px;top:3px" width="14" height="12" viewBox="0 0 14 12"><rect x="0.5" y="0.5" width="5.5" height="4.5" rx="0.5" fill="#555"/><rect x="8" y="0.5" width="5.5" height="4.5" rx="0.5" fill="#555"/><rect x="0.5" y="7" width="5.5" height="4.5" rx="0.5" fill="#555"/><rect x="8" y="7" width="5.5" height="4.5" rx="0.5" fill="#555"/></svg>
    <svg class="a" style="left:1027px;top:3px" width="13" height="12" viewBox="0 0 13 12"><path d="M0.5 1 H5 Q6.5 1 6.5 2.5 V11 Q6.5 10 5 10 H0.5 Z M12.5 1 H8 Q6.5 1 6.5 2.5 V11 Q6.5 10 8 10 H12.5 Z" fill="none" stroke="#666" stroke-width="1"/><path d="M2 3.5 H5 M2 5.5 H5 M2 7.5 H5 M8 3.5 H11 M8 5.5 H11 M8 7.5 H11" stroke="#888" stroke-width="0.7"/></svg>
    <svg class="a" style="left:1056px;top:3px" width="12" height="12" viewBox="0 0 12 12"><rect x="0.5" y="1" width="11" height="7" fill="none" stroke="#666" stroke-width="1"/><path d="M0 0.5 H12" stroke="#666"/><path d="M6 8 V11 M3.5 11.5 H8.5" stroke="#666" stroke-width="1"/><path d="M3.5 4.5 H8.5" stroke="#888" stroke-width="0.8"/></svg>
    <div class="a" style="left:1082px;top:8px;width:7px;height:1.6px;background:#555"></div>
    <div class="a" style="left:1095px;top:7px;width:77px;height:3px;border-radius:2px;background:#A9A9A9"></div>
    <div class="a" style="left:1129px;top:2px;width:13px;height:13px;border-radius:50%;background:#fff;border:0.5px solid #C9C9C9;box-shadow:0 0.5px 1.5px rgba(0,0,0,0.35)"></div>
    <div class="a" style="left:1178px;top:8px;width:7.5px;height:1.6px;background:#555"></div>
    <div class="a" style="left:1181px;top:5px;width:1.6px;height:7.5px;background:#555"></div>
    <div class="st" style="left:1198px;font-size:10.5px;color:#555">119%</div>
    <svg class="a" style="left:1238px;top:3px" width="12" height="12" viewBox="0 0 12 12"><rect x="0.5" y="0.5" width="11" height="11" fill="none" stroke="#666" stroke-width="1"/><path d="M2.5 2.5 L4.5 4.5 M9.5 2.5 L7.5 4.5 M2.5 9.5 L4.5 7.5 M9.5 9.5 L7.5 7.5" stroke="#666" stroke-width="1"/><path d="M2 2 H4 M2 2 V4 M10 2 H8 M10 2 V4 M2 10 H4 M2 10 V8 M10 10 H8 M10 10 V8" stroke="#666" stroke-width="0.9"/></svg>
  </div>
</div>
</body>
</html>
